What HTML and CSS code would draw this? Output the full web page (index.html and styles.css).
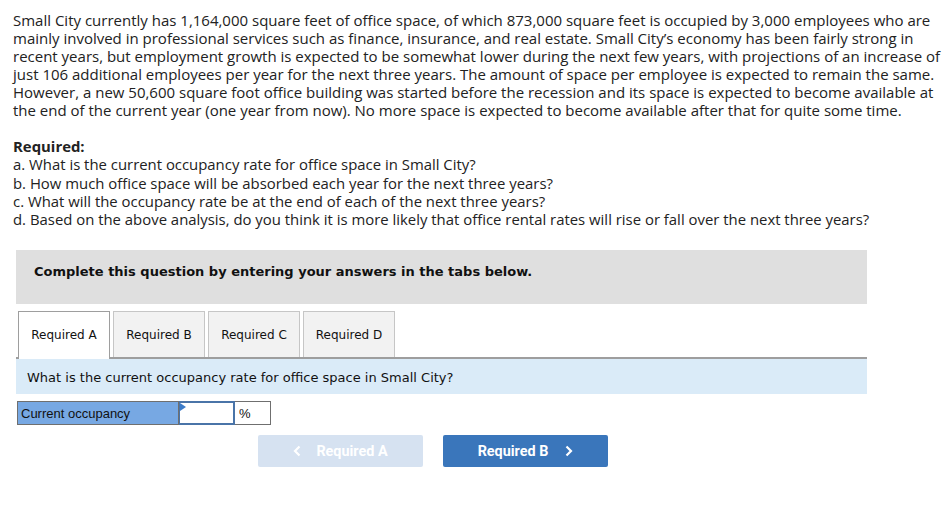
FILE: index.html
```html
<!DOCTYPE html>
<html>
<head>
<meta charset="utf-8">
<link rel="stylesheet" href="styles.css">
</head>
<body>
<div class="page">
  <p class="intro">Small City currently has 1,164,000 square feet of office space, of which 873,000 square feet is occupied by 3,000 employees who are<br>mainly involved in professional services such as finance, insurance, and real estate. Small City’s economy has been fairly strong in<br>recent years, but employment growth is expected to be somewhat lower during the next few years, with projections of an increase of<br>just 106 additional employees per year for the next three years. The amount of space per employee is expected to remain the same.<br>However, a new 50,600 square foot office building was started before the recession and its space is expected to become available at<br>the end of the current year (one year from now). No more space is expected to become available after that for quite some time.</p>
  <div class="required">
    <div class="req-title">Required:</div>
    <div>a. What is the current occupancy rate for office space in Small City?</div>
    <div>b. How much office space will be absorbed each year for the next three years?</div>
    <div>c. What will the occupancy rate be at the end of each of the next three years?</div>
    <div>d. Based on the above analysis, do you think it is more likely that office rental rates will rise or fall over the next three years?</div>
  </div>
  <div class="panel">
    <div class="banner">Complete this question by entering your answers in the tabs below.</div>
    <div class="tabs">
      <div class="tab active">Required A</div>
      <div class="tab">Required B</div>
      <div class="tab">Required C</div>
      <div class="tab">Required D</div>
    </div>
    <div class="question">What is the current occupancy rate for office space in Small City?</div>
    <div class="answer-row">
      <div class="label-cell">Current occupancy</div>
      <div class="input-cell"><span class="flag"></span></div>
      <div class="unit-cell">%</div>
    </div>
    <div class="nav">
      <div class="btn prev"><svg class="chev left" width="8" height="12" viewBox="0 0 8 12"><path d="M6.5 1.5 L2 6 L6.5 10.5" fill="none" stroke="#fff" stroke-width="2.2"/></svg>Required A</div>
      <div class="btn next">Required B<svg class="chev right" width="8" height="12" viewBox="0 0 8 12"><path d="M1.5 1.5 L6 6 L1.5 10.5" fill="none" stroke="#fff" stroke-width="2.2"/></svg></div>
    </div>
  </div>
</div>
</body>
</html>
```
FILE: styles.css
```css
html, body { margin: 0; padding: 0; background: #fff; }
.page { padding: 11px 0 0 13px; }
.intro {
  margin: 0;
  white-space: nowrap;
  font-family: "Open Sans", "Liberation Sans", sans-serif;
  font-size: 15px;
  line-height: 18px;
  color: #222;
}
.required {
  margin-top: 18px;
  font-family: "Open Sans", "Liberation Sans", sans-serif;
  font-size: 14.9px;
  line-height: 18.3px;
  color: #222;
}
.req-title { font-weight: bold; }
.panel { margin-left: 3px; width: 851px; margin-top: 22px; }
.banner {
  background: #dfdfdf;
  height: 54px;
  box-sizing: border-box;
  padding: 14px 0 0 18px;
  font-family: "DejaVu Sans", Verdana, sans-serif;
  font-weight: bold;
  font-size: 13px;
  color: #111;
}
.tabs {
  display: flex;
  gap: 3px;
  margin-top: 7px;
  padding-left: 2px;
  border-bottom: 2px solid #9e9e9e;
}
.tab {
  width: 92px;
  height: 46px;
  box-sizing: border-box;
  border: 1px solid #c6c6c6;
  border-bottom: none;
  background: #f2f2f2;
  display: flex;
  align-items: center;
  justify-content: center;
  font-family: "DejaVu Sans", Verdana, sans-serif;
  font-size: 12px;
  color: #111;
}
.tab.active { background: #fff; border-color: #9e9e9e; margin-bottom: -2px; height: 48px; padding-bottom: 2px; }
.question {
  background: #daebf8;
  height: 35px;
  box-sizing: border-box;
  padding: 11px 0 0 11px;
  font-family: "DejaVu Sans", Verdana, sans-serif;
  font-size: 13px;
  color: #111;
}
.answer-row { display: flex; margin-top: 7px; margin-left: 1px; height: 24px; }
.label-cell {
  width: 162px;
  box-sizing: border-box;
  border: 1px solid #6f6f6f;
  background: #77a8e3;
  font-family: "Liberation Sans", Arial, sans-serif;
  font-size: 13px;
  padding: 4px 0 0 3px;
  color: #111;
}
.input-cell {
  width: 56px;
  box-sizing: border-box;
  border: 2px solid #4a74a8;
  border-left: 1px solid #4a74a8;
  background: #fff;
  position: relative;
}
.flag {
  position: absolute;
  left: 0; top: 0;
  width: 0; height: 0;
  border-top: 4px solid transparent;
  border-bottom: 4px solid transparent;
  border-left: 6px solid #3d7cc9;
}
.unit-cell {
  width: 36px;
  box-sizing: border-box;
  border: 1px solid #6f6f6f;
  border-left: none;
  background: #fff;
  font-family: "Liberation Sans", Arial, sans-serif;
  font-size: 13px;
  padding: 4px 0 0 4px;
  color: #111;
}
.nav { display: flex; gap: 20px; margin-top: 10px; margin-left: 242px; }
.btn {
  width: 165px;
  height: 32px;
  border-radius: 2px;
  display: flex;
  align-items: center;
  justify-content: center;
  font-family: Roboto, sans-serif;
  font-weight: bold;
  font-size: 14.4px;
  color: #fff;
}
.chev.left { margin-right: 15px; }
.chev.right { margin-left: 17px; }
.prev { background: #d6e2f1; }
.next { background: #3a76bb; }
```
